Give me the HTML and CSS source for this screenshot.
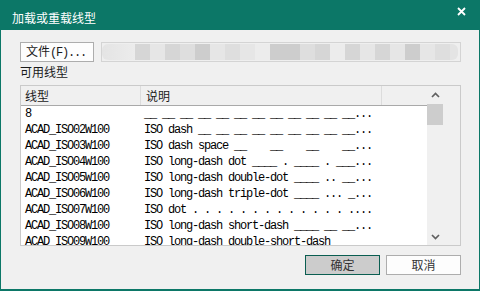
FILE: index.html
```html
<!DOCTYPE html>
<html lang="zh-CN">
<head>
    <meta charset="UTF-8">
    <title>加载或重载线型</title>
    <link rel="stylesheet" href="styles.css">
</head>
<body>
    <div class="window">
        <div class="titlebar">
            <span class="title">加载或重载线型</span>
            <svg class="close" width="9" height="9" viewBox="0 0 9 9">
                <path d="M1 1 L8 8 M8 1 L1 8" stroke="#fff" stroke-width="1.8" fill="none"/>
            </svg>
        </div>

        <div class="content">
            <div class="file-row">
                <button class="btn file-btn">文件<span class="mono">(F)...</span></button>
                <div class="path-field">
                    <div class="blur">
                        <span class="lead"></span>
                        <span class="g2"></span><span class="g4"></span><span class="g2"></span><span class="g3"></span>
                        <span class="g1"></span><span class="g4"></span><span class="g3"></span><span class="g4"></span>
                        <span class="g5"></span><span class="g1"></span><span class="g1"></span><span class="g3"></span>
                        <span class="g2"></span><span class="g5"></span><span class="g2"></span><span class="g4"></span>
                        <span class="g2"></span><span class="g4"></span><span class="g1"></span><span class="g4"></span>
                        <span class="g3"></span><span class="tail"></span>
                    </div>
                </div>
            </div>

            <div class="label">可用线型</div>

            <div class="listbox">
                <div class="list">
                    <div class="list-header">
                        <div class="col col-name">线型</div>
                        <div class="col col-desc">说明</div>
                        <div class="col col-rest"></div>
                    </div>
                    <div class="rows">
                        <div class="row"><span class="cell c1">8</span><span class="cell c2">__ __ __ __ __ __ __ __ __ __ __ __...</span></div>
                        <div class="row"><span class="cell c1">ACAD_ISO02W100</span><span class="cell c2">ISO dash __ __ __ __ __ __ __ __ __...</span></div>
                        <div class="row"><span class="cell c1">ACAD_ISO03W100</span><span class="cell c2">ISO dash space __    __    __    __...</span></div>
                        <div class="row"><span class="cell c1">ACAD_ISO04W100</span><span class="cell c2">ISO long-dash dot ____ . ____ . ___...</span></div>
                        <div class="row"><span class="cell c1">ACAD_ISO05W100</span><span class="cell c2">ISO long-dash double-dot ____ .. __...</span></div>
                        <div class="row"><span class="cell c1">ACAD_ISO06W100</span><span class="cell c2">ISO long-dash triple-dot ____ ... _...</span></div>
                        <div class="row"><span class="cell c1">ACAD_ISO07W100</span><span class="cell c2">ISO dot . . . . . . . . . . . . . ....</span></div>
                        <div class="row"><span class="cell c1">ACAD_ISO08W100</span><span class="cell c2">ISO long-dash short-dash ____ __ __...</span></div>
                        <div class="row"><span class="cell c1">ACAD_ISO09W100</span><span class="cell c2">ISO long-dash double-short-dash</span></div>
                    </div>
                </div>
                <div class="vscroll">
                    <div class="sb-btn">
                        <svg width="9" height="6" viewBox="0 0 9 6"><polyline points="1,5 4.5,1.5 8,5" stroke="#606060" stroke-width="1.7" fill="none"/></svg>
                    </div>
                    <div class="thumb"></div>
                    <div class="sb-btn sb-down">
                        <svg width="9" height="6" viewBox="0 0 9 6"><polyline points="1,1 4.5,4.5 8,1" stroke="#606060" stroke-width="1.7" fill="none"/></svg>
                    </div>
                </div>
                <div class="filler"></div>
            </div>

            <div class="actions">
                <button class="btn ok-btn">确定</button>
                <button class="btn">取消</button>
            </div>
        </div>
    </div>
</body>
</html>
```

FILE: styles.css
```css
* {
    box-sizing: border-box;
}
body {
    margin: 0;
    font-family: "Noto Sans CJK SC", "Liberation Sans", sans-serif;
    font-size: 12px;
    color: #1a1a1a;
    background-color: #f0f0f0;
}
.window {
    width: 480px;
    height: 291px;
    border: 1px solid #0c7767;
    border-bottom-width: 2px;
    background-color: #f0f0f0;
    display: flex;
    flex-direction: column;
    overflow: hidden;
}
.titlebar {
    height: 29px;
    flex: none;
    background-color: #0c7767;
    display: flex;
    align-items: flex-start;
    justify-content: space-between;
    padding: 0 13px 0 11px;
}
.title {
    color: #fff;
    line-height: 16px;
    margin-top: 9px;
}
.close {
    margin-top: 6px;
}
.content {
    padding: 12px 18px 0 19px;
    display: flex;
    flex-direction: column;
}
.mono,
.cell {
    font-family: "Liberation Mono", "DejaVu Sans Mono", monospace;
    font-size: 12px;
    letter-spacing: -1.2px;
    white-space: pre;
}
.btn {
    height: 20px;
    border: 1px solid #adadad;
    background-color: #fdfdfd;
    font-family: inherit;
    font-size: 12px;
    color: #333;
    padding: 0;
    line-height: 16px;
}
.file-row {
    display: flex;
    gap: 7px;
    height: 20px;
}
.file-btn {
    width: 74px;
    flex: none;
    text-align: left;
    padding-left: 5px;
    color: #1a1a1a;
}
.path-field {
    flex: 1;
    border: 1px solid #d4d4d4;
    background-color: #efefef;
    overflow: hidden;
}
.blur {
    display: flex;
    height: 100%;
    padding: 1px 0;
    filter: blur(0.7px);
}
.blur span {
    width: 15px;
    flex: none;
}
.blur .lead {
    width: 33px;
    background: linear-gradient(90deg, #e4e4e4, #ececec);
    border-radius: 6px 0 0 6px;
}
.blur .tail {
    width: 8px;
    background-color: #e4e4e4;
    border-radius: 0 6px 6px 0;
}
.g1 { background-color: #cdcdcd; }
.g2 { background-color: #d6d6d6; }
.g3 { background-color: #dedede; }
.g4 { background-color: #e6e6e6; }
.g5 { background-color: #ececec; }
.label {
    margin-top: 2px;
    line-height: 16px;
    height: 16px;
}
.listbox {
    margin-top: 5px;
    height: 161px;
    border: 1px solid #cacaca;
    display: flex;
    background-color: #fff;
}
.list {
    width: 406px;
    flex: none;
    overflow: hidden;
}
.list-header {
    display: flex;
    height: 20px;
    background-color: #f0f0f0;
    border-bottom: 1px solid #a9a9a9;
}
.col {
    line-height: 19px;
    border-right: 1px solid #dcdcdc;
}
.col-name {
    width: 120px;
    padding-left: 4px;
}
.col-desc {
    width: 241px;
    padding-left: 5px;
}
.col-rest {
    flex: 1;
    border-right: none;
}
.row {
    display: flex;
    height: 16px;
    line-height: 16px;
    color: #000;
}
.c1 {
    width: 120px;
    padding-left: 4px;
}
.c2 {
    padding-left: 3px;
}
.vscroll {
    width: 17px;
    flex: none;
    background-color: #f0f0f0;
    display: flex;
    flex-direction: column;
}
.sb-btn {
    height: 17px;
    display: flex;
    align-items: center;
    justify-content: center;
}
.sb-down {
    margin-top: auto;
}
.thumb {
    height: 21px;
    margin: 1px 1px 0 0;
    background-color: #cdcdcd;
}
.filler {
    flex: 1;
    background-color: #f0f0f0;
}
.actions {
    margin-top: 9px;
    display: flex;
    justify-content: flex-end;
    gap: 6px;
}
.actions .btn {
    width: 75px;
}
.ok-btn {
    background-color: #cccccc;
    border-color: #0a5e51;
}
```
